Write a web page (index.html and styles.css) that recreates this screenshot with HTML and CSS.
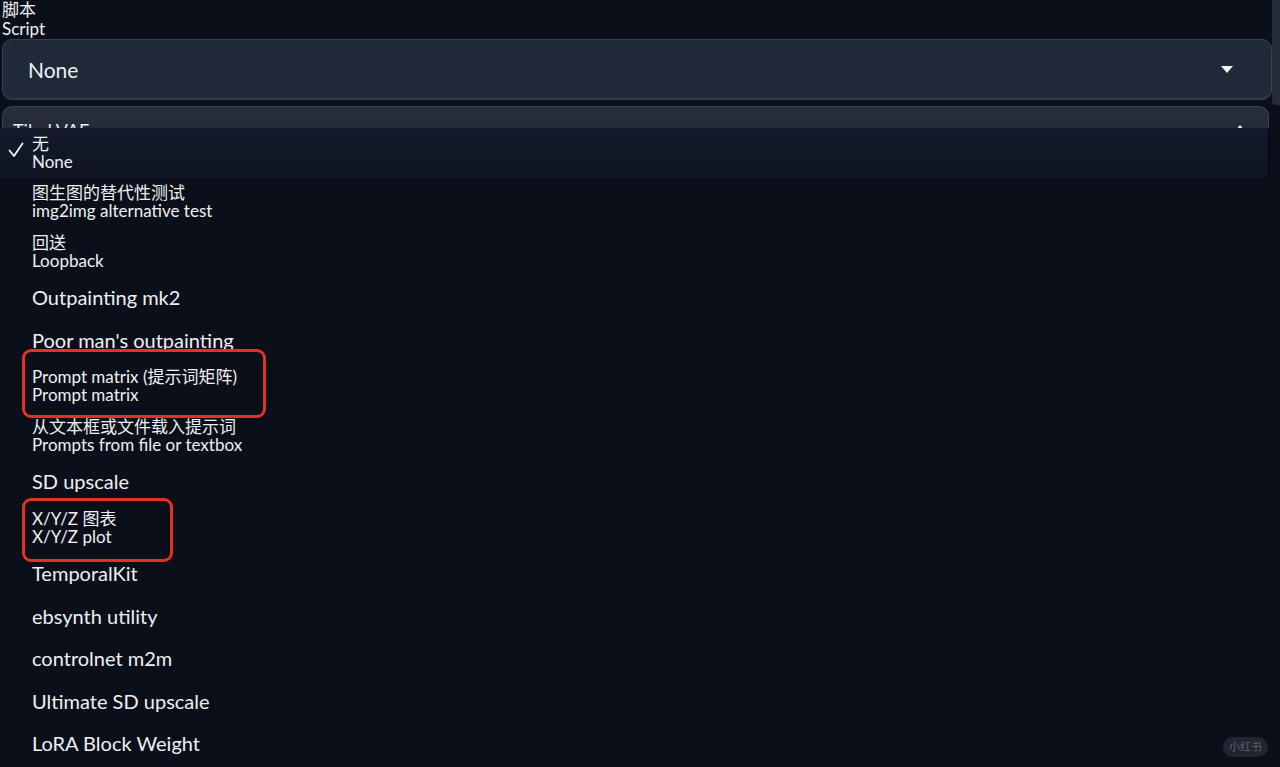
FILE: index.html
```html
<!DOCTYPE html>
<html lang="zh">
<head>
    <meta charset="UTF-8">
    <meta name="viewport" content="width=device-width, initial-scale=1.0">
    <title>脚本 Script</title>
    <link rel="stylesheet" href="styles.css">
</head>
<body>
    <div class="page">
        <div class="panel">
            <!-- 脚本选择 -->
            <label class="field-label">脚本<br>Script</label>
            <div class="select">
                <span class="select-value">None</span>
                <svg class="caret" width="12" height="7" viewBox="0 0 12 7"><path d="M0 0 H12 L6 7 Z" fill="#f3f4f6"/></svg>
            </div>
            <!-- 下一个折叠面板（被菜单挡住） -->
            <div class="accordion">
                <span class="accordion-title">Tiled VAE</span>
                <svg class="caret" width="12" height="7" viewBox="0 0 12 7"><path d="M0 7 H12 L6 0 Z" fill="#f3f4f6"/></svg>
            </div>
        </div>
        <div class="edge"></div>
    </div>

    <!-- 下拉菜单 -->
    <ul class="menu">
        <li class="item double selected">
            <svg class="check" width="16" height="16" viewBox="0 0 16 16"><path d="M1.5 8.5 L6 14 L14.5 1.5" fill="none" stroke="#f3f4f6" stroke-width="1.8" stroke-linecap="round" stroke-linejoin="round"/></svg>
            <span>无</span><span>None</span>
        </li>
        <li class="item double"><span>图生图的替代性测试</span><span>img2img alternative test</span></li>
        <li class="item double"><span>回送</span><span>Loopback</span></li>
        <li class="item">Outpainting mk2</li>
        <li class="item">Poor man's outpainting</li>
        <li class="item double"><span>Prompt matrix (提示词矩阵)</span><span>Prompt matrix</span></li>
        <li class="item double"><span>从文本框或文件载入提示词</span><span>Prompts from file or textbox</span></li>
        <li class="item">SD upscale</li>
        <li class="item double"><span>X/Y/Z 图表</span><span>X/Y/Z plot</span></li>
        <li class="item">TemporalKit</li>
        <li class="item">ebsynth utility</li>
        <li class="item">controlnet m2m</li>
        <li class="item">Ultimate SD upscale</li>
        <li class="item">LoRA Block Weight</li>
    </ul>

    <!-- 红框标注 -->
    <div class="mark mark-matrix"></div>
    <div class="mark mark-xyz"></div>

    <div class="watermark">小红书</div>
</body>
</html>
```

FILE: styles.css
```css
/* 页面整体 */
body {
    margin: 0;
    height: 767px;
    overflow: hidden;
    background-color: #0b0f19;
    color: #eef0f3;
    font-family: 'Lato', 'Noto Sans CJK SC', sans-serif;
}
.page {
    display: flex;
}
.panel {
    flex: 1;
    padding-left: 2px;
}
/* 右侧边框条 */
.edge {
    width: 8px;
    height: 105px;
    background-color: #242c38;
    border-bottom-left-radius: 4px;
}
/* 标签 */
.field-label {
    display: block;
    font-size: 17px;
    line-height: 19px;
}
/* 选择框 */
.select {
    display: flex;
    align-items: center;
    justify-content: space-between;
    height: 59px;
    margin-top: 1px;
    padding: 0 38px 0 25px;
    border: 1px solid #374151;
    border-radius: 10px;
    background-color: #1f2937;
    box-shadow: inset 0 -2px 0 #283241;
}
.select-value {
    font-size: 21px;
}
/* 折叠面板 */
.accordion {
    display: flex;
    justify-content: space-between;
    align-items: flex-start;
    height: 40px;
    margin-top: 6px;
    margin-right: 3px;
    padding: 12px 22px 0 10px;
    border: 1px solid #3a4352;
    border-bottom: none;
    border-radius: 10px 10px 0 0;
    background: linear-gradient(#272f3c, #1b2230);
    font-size: 18px;
}
.accordion .caret {
    margin-top: 6px;
}
/* 下拉菜单 */
.menu {
    position: absolute;
    top: 128px;
    left: 0;
    width: 1270px;
    bottom: 0;
    margin: 0;
    padding: 0;
    list-style: none;
    background-color: #0b0f19;
}
.item {
    position: relative;
    padding: 6.75px 0 6.75px 32px;
    font-size: 20px;
    line-height: 29px;
}
.item.double {
    font-size: 17px;
    line-height: 18px;
}
.item.double span {
    display: block;
}
.item.selected {
    background: linear-gradient(#121a2a, #0f1522);
    border-right: 2px solid #070a10;
}
.check {
    position: absolute;
    left: 8px;
    top: 14px;
}
/* 红框标注 */
.mark {
    position: absolute;
    border: 3px solid #e3321f;
    border-radius: 9px;
}
.mark-matrix {
    left: 22px;
    top: 349px;
    width: 238px;
    height: 63px;
}
.mark-xyz {
    left: 22px;
    top: 498px;
    width: 145px;
    height: 58px;
}
/* 水印 */
.watermark {
    position: absolute;
    right: 12px;
    bottom: 10px;
    padding: 2px 6px;
    border-radius: 10px;
    background-color: #20252f;
    color: #5b6270;
    font-size: 11px;
    line-height: 16px;
}
```
